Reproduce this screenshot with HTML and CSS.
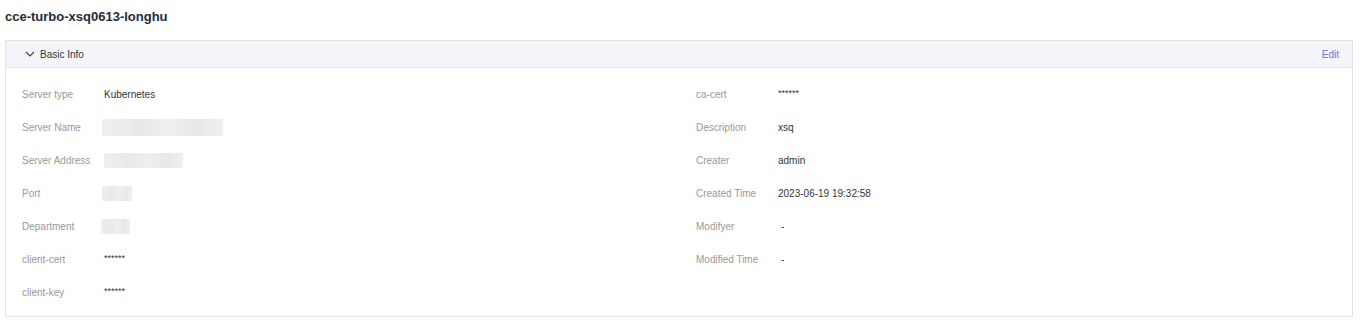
FILE: index.html
```html
<!DOCTYPE html>
<html lang="en">
<head>
    <meta charset="UTF-8">
    <meta name="viewport" content="width=device-width, initial-scale=1.0">
    <title>cce-turbo-xsq0613-longhu</title>
    <link rel="stylesheet" href="styles.css">
</head>
<body>
    <div class="page">
        <h1 class="title">cce-turbo-xsq0613-longhu</h1>

        <div class="panel">
            <div class="panel-head">
                <div class="head-left">
                    <svg class="chevron" width="10" height="6" viewBox="0 0 10 6">
                        <path d="M1 1 L5 5 L9 1" fill="none" stroke="#444" stroke-width="1.2"/>
                    </svg>
                    <span>Basic Info</span>
                </div>
                <a class="edit" href="#">Edit</a>
            </div>

            <div class="panel-body">
                <div class="col">
                    <div class="row"><span class="label">Server type</span><span class="value">Kubernetes</span></div>
                    <div class="row"><span class="label">Server Name</span><span class="blur blur-name"></span></div>
                    <div class="row"><span class="label">Server Address</span><span class="blur blur-addr"></span></div>
                    <div class="row"><span class="label">Port</span><span class="blur blur-port"></span></div>
                    <div class="row"><span class="label">Department</span><span class="blur blur-dept"></span></div>
                    <div class="row"><span class="label">client-cert</span><span class="value mask">******</span></div>
                    <div class="row"><span class="label">client-key</span><span class="value mask">******</span></div>
                </div>
                <div class="col">
                    <div class="row"><span class="label">ca-cert</span><span class="value mask">******</span></div>
                    <div class="row"><span class="label">Description</span><span class="value">xsq</span></div>
                    <div class="row"><span class="label">Creater</span><span class="value">admin</span></div>
                    <div class="row"><span class="label">Created Time</span><span class="value">2023-06-19 19:32:58</span></div>
                    <div class="row"><span class="label">Modifyer</span><span class="value dash">-</span></div>
                    <div class="row"><span class="label">Modified Time</span><span class="value dash">-</span></div>
                </div>
            </div>
        </div>
    </div>
</body>
</html>
```

FILE: styles.css
```css
body {
    font-family: "Liberation Sans", Arial, sans-serif;
    margin: 0;
    padding: 0;
    background-color: #fff;
    color: #333;
    font-size: 10px;
}
.page {
    padding: 0 13px 0 5px;
}
.title {
    margin: 0;
    height: 34px;
    line-height: 34px;
    font-size: 13px;
    font-weight: bold;
    color: #252b3a;
}
.panel {
    margin-top: 6px;
    border: 1px solid #e3e3e3;
}
.panel-head {
    display: flex;
    justify-content: space-between;
    align-items: center;
    height: 26px;
    padding: 0 13px 0 19px;
    background-color: #f3f5fb;
    border-bottom: 1px solid #e3e5ea;
    font-size: 10px;
}
.head-left {
    display: flex;
    align-items: center;
    gap: 5px;
    color: #333;
}
.chevron {
    display: block;
}
.edit {
    color: #5e7ce0;
    text-decoration: none;
    font-size: 10px;
}
.panel-body {
    display: grid;
    grid-template-columns: 1fr 1fr;
    column-gap: 34px;
    padding: 10px 16px 7px;
}
.row {
    display: flex;
    align-items: center;
    height: 33px;
}
.label {
    width: 82px;
    flex-shrink: 0;
    color: #999;
    font-size: 10px;
}
.value {
    color: #333;
    font-size: 10px;
}
.mask {
    font-size: 9px;
    margin-top: -4px;
}
.dash {
    padding-left: 3px;
}
.blur {
    display: inline-block;
    height: 17px;
    background: linear-gradient(90deg, #efefef, #e9e9e9 30%, #efefef 55%, #e8e8e8 80%, #f0f0f0);
    filter: blur(0.6px);
}
.blur-name {
    width: 121px;
    margin-left: -2px;
}
.blur-addr {
    width: 79px;
    height: 15px;
}
.blur-port {
    width: 30px;
    height: 15px;
    margin-left: -2px;
}
.blur-dept {
    width: 29px;
    height: 15px;
    margin-left: -3px;
}
```
